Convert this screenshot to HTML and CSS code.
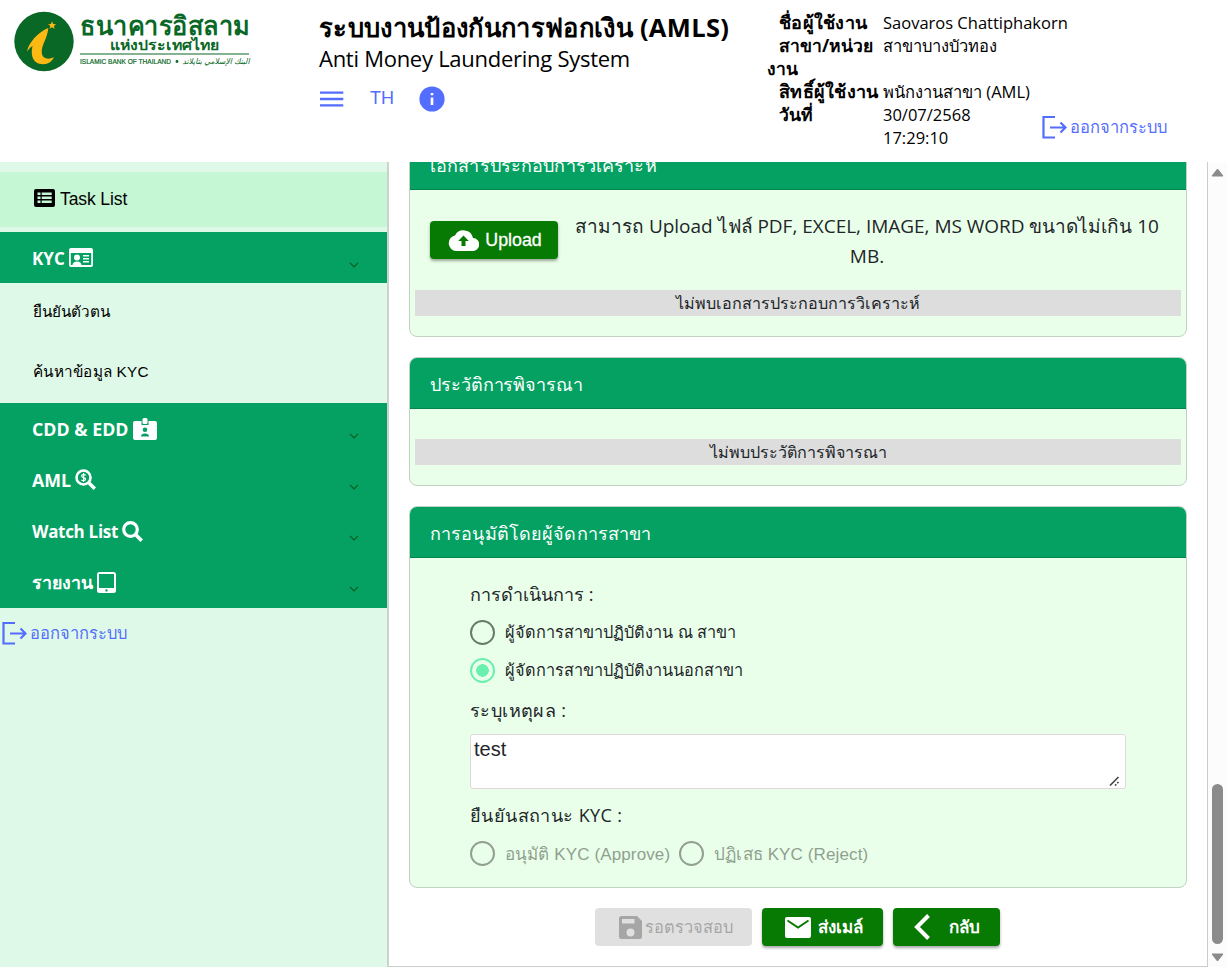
FILE: index.html
```html
<!DOCTYPE html>
<html lang="th">
<head>
<meta charset="utf-8">
<title>AMLS</title>
<link rel="stylesheet" href="styles.css">
</head>
<body>
<svg class="defs" width="0" height="0">
  <symbol id="logout" viewBox="0 0 26 24"><path d="M14 2H2.500v20.500H14M9 12.500h15.500M19.500 7.500l5 5-5 5" fill="none" stroke="currentColor" stroke-width="2.200"/></symbol>
  <symbol id="chev" viewBox="0 0 10 6"><path d="M1 .8l4 4 4-4" fill="none" stroke="currentColor" stroke-width="1.200"/></symbol>
</svg>
<header class="top">
  <svg class="logo" width="240" height="64" viewBox="0 0 240 64">
    <circle cx="30" cy="31.500" r="29.700" fill="#0a6827"/>
    <path d="M34.300 18C24 22 14.500 33 13 41.500c2-2.500 3.500-4.500 5.500-5.500-2 9 0 18 10.500 18.200 5.500 0 9.500-3 10.800-7.200-5 3-11.500 2-12-4-.7-8 5.500-14 6.500-25z" fill="#fdb913"/>
    <path d="M38 11.300l1.200 2.700 2.900.2-2.200 1.800.7 2.800-2.600-1.500-2.400 1.500.7-2.800-2.200-1.800 2.900-.2z" fill="#fdb913"/>
    <g fill="#0a6827">
      <text class="lt" x="66" y="25" font-size="26" font-weight="700" textLength="170" lengthAdjust="spacingAndGlyphs">ธนาคารอิสลาม</text>
      <text class="lt" x="96" y="40" font-size="14" font-weight="700" textLength="109" lengthAdjust="spacingAndGlyphs">แห่งประเทศไทย</text>
      <rect x="66" y="43.500" width="169" height="1"/>
      <text class="en" x="66" y="53.500" font-size="7" textLength="91" lengthAdjust="spacingAndGlyphs">ISLAMIC BANK OF THAILAND</text>
      <circle cx="163" cy="51.500" r="1.400"/>
      <text class="ar" x="168.500" y="53.500" font-size="8" textLength="67" lengthAdjust="spacingAndGlyphs" direction="ltr">البنك الإسلامي بتايلاند</text>
    </g>
  </svg>
  <div class="titles">
    <h1>ระบบงานป้องกันการฟอกเงิน (AMLS)</h1>
    <p>Anti Money Laundering System</p>
    <div class="tools">
      <svg width="24" height="24" viewBox="0 0 24 24"><path d="M0 5.600h23.300M0 12h23.300M0 18.400h23.300" stroke="currentColor" stroke-width="2.300"/></svg>
      <span class="lang">TH</span>
      <svg width="26" height="26" viewBox="0 0 26 26"><circle cx="13" cy="13" r="12.600" fill="currentColor"/><path d="M11.700 7h2.600v2.200h-2.600zM11.700 11.500h2.600v7.500h-2.600z" fill="#fff"/></svg>
    </div>
  </div>
  <dl class="user">
    <dt class="loose">ชื่อผู้ใช้งาน</dt><dd>Saovaros Chattiphakorn</dd>
    <dt>สาขา/หน่วย<br><span class="wrap">งาน</span></dt><dd>สาขาบางบัวทอง</dd>
    <dt class="loose">สิทธิ์ผู้ใช้งาน</dt><dd>พนักงานสาขา (AML)</dd>
    <dt>วันที่</dt><dd>30/07/2568<br>17:29:10</dd>
  </dl>
  <a class="logout"><svg width="26" height="24"><use href="#logout"/></svg><span>ออกจากระบบ</span></a>
</header>
<div class="body">
  <nav class="side">
    <a class="task"><svg width="21" height="18" viewBox="0 0 21 18"><rect width="21" height="18" rx="2"/><path d="M3.500 3.500h3v2.600h-3zM7.700 3.500h10v2.600h-10zM3.500 7.500h3v2.600h-3zM7.700 7.500h10v2.600h-10zM3.500 11.500h3v2.600h-3zM7.700 11.500h10v2.600h-10z" fill="#c6f7d4"/></svg><span>Task List</span></a>
    <div class="group first"><b class="kyc">KYC</b>
      <svg width="24" height="19" viewBox="0 0 24 19"><path fill-rule="evenodd" d="M2 0h20a2 2 0 0 1 2 2v15a2 2 0 0 1-2 2H2a2 2 0 0 1-2-2V2a2 2 0 0 1 2-2zM1.800 5v12H3.500c.3-2.300 1.700-3.500 4.500-3.500s4.200 1.200 4.500 3.500h9.700V5zM8 6.500a3 3 0 1 1 0 6 3 3 0 0 1 0-6zM14 7h6v1.500h-6zM14 10h6v1.500h-6zM14 13h6v1.400h-6z" fill="#fff"/></svg>
      <svg class="chev" width="10" height="6"><use href="#chev"/></svg></div>
    <a class="sub">ยืนยันตัวตน</a>
    <a class="sub kyc-search">ค้นหาข้อมูล KYC</a>
    <div class="group"><b class="cdd">CDD &amp; EDD</b>
      <svg width="24" height="22" viewBox="0 0 24 22"><path fill-rule="evenodd" d="M2 3h6.500v4h7V3H22a2 2 0 0 1 2 2v15a2 2 0 0 1-2 2H2a2 2 0 0 1-2-2V5a2 2 0 0 1 2-2zM12 9.500a2.300 2.300 0 1 0 0 4.600 2.300 2.300 0 0 0 0-4.600zM8 18.500h8c0-2-1.500-3-4-3s-4 1-4 3z" fill="#fff"/><rect x="9.500" width="5" height="6" rx="1.500" fill="#fff"/></svg>
      <svg class="chev" width="10" height="6"><use href="#chev"/></svg></div>
    <div class="group"><b class="aml">AML</b>
      <svg width="21" height="21" viewBox="0 0 21 21"><circle cx="8.500" cy="8.500" r="7" fill="none" stroke="#fff" stroke-width="2.600"/><path d="M14 14l5.800 5.800" stroke="#fff" stroke-width="3.400"/><path d="M10.700 6.200C9.500 5.300 6.600 5.200 6.600 7c0 2 4 1.100 4 3.100 0 1.800-2.900 1.700-4.200.8M8.600 4v9" fill="none" stroke="#fff" stroke-width="1.200"/></svg>
      <svg class="chev" width="10" height="6"><use href="#chev"/></svg></div>
    <div class="group"><b class="watch">Watch List</b>
      <svg width="21" height="21" viewBox="0 0 21 21"><circle cx="8.500" cy="8.500" r="6.800" fill="none" stroke="#fff" stroke-width="3.200"/><path d="M13.500 13.500l6.200 6.200" stroke="#fff" stroke-width="3.600"/></svg>
      <svg class="chev" width="10" height="6"><use href="#chev"/></svg></div>
    <div class="group"><b class="report">รายงาน</b>
      <svg width="19" height="21" viewBox="0 0 19 21"><path fill-rule="evenodd" d="M2.500 0h14A2.500 2.500 0 0 1 19 2.500v16a2.500 2.500 0 0 1-2.500 2.500h-14A2.500 2.500 0 0 1 0 18.500v-16A2.500 2.500 0 0 1 2.500 0zM2 2v14h15V2zM9.500 17.200a1.200 1.200 0 1 0 0 2.400 1.200 1.200 0 0 0 0-2.400z" fill="#fff"/></svg>
      <svg class="chev" width="10" height="6"><use href="#chev"/></svg></div>
    <a class="logout"><svg width="26" height="24"><use href="#logout"/></svg><span>ออกจากระบบ</span></a>
  </nav>
  <main class="main">
    <section class="card">
      <h2>เอกสารประกอบการวิเคราะห์</h2>
      <div class="card-body">
        <div class="upload-row">
          <button class="btn upload"><svg width="31" height="21" viewBox="0 0 31 21"><path d="M25 8A9.700 9.700 0 0 0 7 5.400 7.900 7.900 0 0 0 8 21h16.500A6.500 6.500 0 0 0 25 8z" fill="#fff"/><path d="M15.500 5.500l5.300 5.500h-3.300v5h-4v-5h-3.300z" fill="#077a03"/></svg><span>Upload</span></button>
          <p class="hint">สามารถ Upload ไฟล์ PDF, EXCEL, IMAGE, MS WORD ขนาดไม่เกิน 10<br>MB.</p>
        </div>
        <div class="empty">ไม่พบเอกสารประกอบการวิเคราะห์</div>
      </div>
    </section>
    <section class="card">
      <h2 class="history">ประวัติการพิจารณา</h2>
      <div class="card-body pad"><div class="empty">ไม่พบประวัติการพิจารณา</div></div>
    </section>
    <section class="card">
      <h2>การอนุมัติโดยผู้จัดการสาขา</h2>
      <div class="form">
        <label class="lab">การดำเนินการ :</label>
        <div class="radio"><i></i><span>ผู้จัดการสาขาปฏิบัติงาน ณ สาขา</span></div>
        <div class="radio on"><i></i><span>ผู้จัดการสาขาปฏิบัติงานนอกสาขา</span></div>
        <label class="lab wide">ระบุเหตุผล :</label>
        <div class="area"><span>test</span><svg width="11" height="10" viewBox="0 0 11 10"><path d="M1 9.500l8.500-8.500M6 9.500l1.300-1.300M8.200 7.300l1.300-1.300" stroke="#444" stroke-width="1.600"/></svg></div>
        <label class="lab wide">ยืนยันสถานะ KYC :</label>
        <div class="pair">
          <div class="radio off"><i></i><span>อนุมัติ KYC (Approve)</span></div>
          <div class="radio off"><i></i><span>ปฏิเสธ KYC (Reject)</span></div>
        </div>
      </div>
    </section>
    <div class="actions">
      <button class="btn wait"><svg width="23" height="23" viewBox="0 0 23 23"><path fill-rule="evenodd" d="M2.500 0H18l5 5v15.500a2.500 2.500 0 0 1-2.500 2.500h-18A2.500 2.500 0 0 1 0 20.500v-18A2.500 2.500 0 0 1 2.500 0zM3 3v4.500h12.500V3zM11.500 12.500a4 4 0 1 0 0 8 4 4 0 0 0 0-8z" fill="#a6a6a6"/></svg><span>รอตรวจสอบ</span></button>
      <button class="btn mail"><svg width="26" height="21" viewBox="0 0 26 21"><rect width="26" height="21" rx="2" fill="#fff"/><path d="M2.500 3.500L13 10.500l10.500-7" fill="none" stroke="#077a03" stroke-width="2"/></svg><span>ส่งเมล์</span></button>
      <button class="btn back"><svg width="16" height="26" viewBox="0 0 16 26"><path d="M14.500 1.500L3 13l11.500 11.500" fill="none" stroke="#fff" stroke-width="4"/></svg><span>กลับ</span></button>
    </div>
  </main>
  <div class="bar"><svg width="13" height="9" viewBox="0 0 13 9"><path d="M6.500 1L12 8H1z" fill="#8b8b8b" stroke="#8b8b8b" stroke-linejoin="round"/></svg><div class="thumb"></div><svg width="13" height="9" viewBox="0 0 13 9"><path d="M6.500 8L12 1H1z" fill="#8b8b8b" stroke="#8b8b8b" stroke-linejoin="round"/></svg></div>
</div>
</body>
</html>
```
FILE: styles.css
```css
* { box-sizing: border-box; margin: 0; padding: 0; }
body { width: 1227px; height: 967px; overflow: hidden; background: #fff; color: #000; font-family: "Open Sans", "Noto Sans", sans-serif; }
.defs { position: absolute; }
span, b, h1, dt, dd { white-space: nowrap; }
svg { flex: none; }

.top { height: 162px; display: grid; grid-template-columns: 319px 448px 274px 1fr; }
.logo { margin: 10px 0 0 14px; overflow: visible; }
.lt { font-family: "Noto Sans", sans-serif; }
.en { font-family: "Liberation Sans", sans-serif; stroke: #0a6827; stroke-width: .2; }
.ar { font-family: "DejaVu Sans", sans-serif; font-style: italic; }
.titles { padding-top: 12px; }
.titles h1 { font-size: 25.500px; line-height: 31px; height: 32px; letter-spacing: .33px; }
.titles p { font-size: 22px; line-height: 29px; height: 32px; letter-spacing: -.27px; }
.tools { display: flex; align-items: center; height: 26px; margin-top: 10px; padding-left: 1px; color: #536dfe; }
.lang { font: 18px "Liberation Sans", sans-serif; margin: 0 25px 2px 26px; }
.user { display: grid; grid-template-columns: 116px 158px; align-content: start; padding-top: 11px; font-size: 16.500px; line-height: 23px; }
.user dt { height: 23px; font-size: 17.500px; font-weight: 700; text-indent: 12px; }
.user dt:nth-of-type(2) { height: 46px; }
.user .loose { font-size: 18px; letter-spacing: .25px; }
.user .wrap { display: inline-block; text-indent: 0; }
.logout { display: flex; gap: 3px; color: #536dfe; font-size: 16.500px; line-height: 23px; }
.top .logout { padding: 115px 0 0; }

.body { display: grid; grid-template-columns: 389px 818px 20px; height: 805px; }
.side { background: #dff9e8; border-right: 2px solid #ccd2cd; padding-top: 10px; }
.task { display: flex; align-items: center; gap: 5px; height: 55px; padding-left: 34px; background: #c6f7d4; font: 17.500px "Liberation Sans", sans-serif; letter-spacing: -.1px; }
.task svg { margin-bottom: 3px; }
.group { display: flex; align-items: center; gap: 4px; height: 51.25px; padding: 0 28px 0 32px; background: #04a162; color: #fff; font-size: 17px; }
.group b { padding-top: 1px; }
.kyc { letter-spacing: 0; }
.cdd { font-size: 17.800px; }
.aml { font-size: 17.800px; }
.watch { letter-spacing: -.3px; }
.report { font-size: 17.800px; }
.group.first { height: 51px; margin-top: 5px; }
.group .chev { margin: 14px 0 0 auto; color: #0b5c1c; }
.sub { display: flex; align-items: center; height: 60px; padding: 0 0 4px 33px; font: 15.300px "Liberation Sans", "Noto Sans", sans-serif; }
.kyc-search { letter-spacing: .25px; }
.side .logout { padding: 13px 0 0 1px; }

.main { display: flex; flex-direction: column; justify-content: flex-end; gap: 20px; overflow: hidden; padding: 0 20px 20px; border-bottom: 1px solid #ccc; }
.card { flex: none; border: 1px solid #c0d2c2; border-radius: 8px; background: #eaffea; overflow: hidden; color: #212529; }
.card h2 { height: 51px; padding-left: 20px; background: #04a162; border-bottom: 1px solid #048451; color: #fff; font-size: 18px; font-weight: 500; line-height: 52px; letter-spacing: .12px; }
.card .history { letter-spacing: -.08px; }
.card-body { padding: 20px 5px; }
.card-body.pad { padding-top: 30px; }
.upload-row { display: grid; grid-template-columns: 133px 1fr; height: 80px; padding: 1px 10px 0 15px; }
.hint { text-align: center; font-size: 19px; line-height: 30px; letter-spacing: -.02px; }
.empty { height: 26px; background: #ddd; text-align: center; font-size: 16.100px; line-height: 27px; }
.btn { display: flex; align-items: center; justify-content: center; height: 38px; border: 0; border-radius: 4px; background: #077a03; color: #fff; box-shadow: 0 2px 3px rgba(0,0,0,.35); font: 700 17px "Open Sans", "Noto Sans", sans-serif; }
.upload { width: 128px; margin-top: 10px; padding-left: 2px; gap: 6px; font: 17.800px "Liberation Sans", sans-serif; -webkit-text-stroke: .3px #fff; }

.form { height: 329px; padding: 21px 60px 0; }
.lab { display: block; height: 30px; font-size: 18px; line-height: 30px; }
.lab.wide { letter-spacing: .4px; }
.radio { display: flex; align-items: center; gap: 10px; height: 38px; font: 16.270px "Liberation Sans", "Noto Sans", sans-serif; }
.form > .lab:first-child { margin-bottom: 4px; }
.radio i { width: 25px; height: 25px; border: 2px solid #6b7a6b; border-radius: 50%; flex: none; }
.radio.on i { border-color: #69f0ae; background: radial-gradient(circle, #69f0ae 6px, transparent 6.500px); }
.radio.on + .lab { margin: 6px 0 9px; }
.radio.off { color: #909f90; font-size: 17px; letter-spacing: .12px; }
.radio.off i { border-color: #929f92; }
.pair { display: flex; gap: 9px; margin-top: 4px; }
.area { display: flex; justify-content: space-between; height: 55px; padding: 2px 5px 2px 3px; background: #fff; border: 1px solid #e0d8d8; border-radius: 3px; font: 20px/24px "Liberation Sans", sans-serif; margin-bottom: 11px; }
.area svg { align-self: flex-end; }

.actions { display: flex; justify-content: center; gap: 10px; height: 38px; flex: none; margin-right: 2px; }
.wait { width: 157px; gap: 3px; padding-left: 6px; background: #e0e0e0; color: #a6a6a6; box-shadow: none; font-weight: 400; font-size: 16.400px; }
.mail { width: 121px; gap: 7px; padding-left: 4px; letter-spacing: .2px; }
.mail span, .back span { margin-bottom: 2px; }
.back { width: 107px; gap: 19px; padding-left: 1px; }
.bar { display: flex; flex-direction: column; align-items: center; border-left: 1px solid #ccc; background: #fcfcfc; padding: 6px 0 5px; }
.thumb { width: 11px; height: 160px; margin: auto 0 9px; border-radius: 6px; background: #8b8b8b; }
```
